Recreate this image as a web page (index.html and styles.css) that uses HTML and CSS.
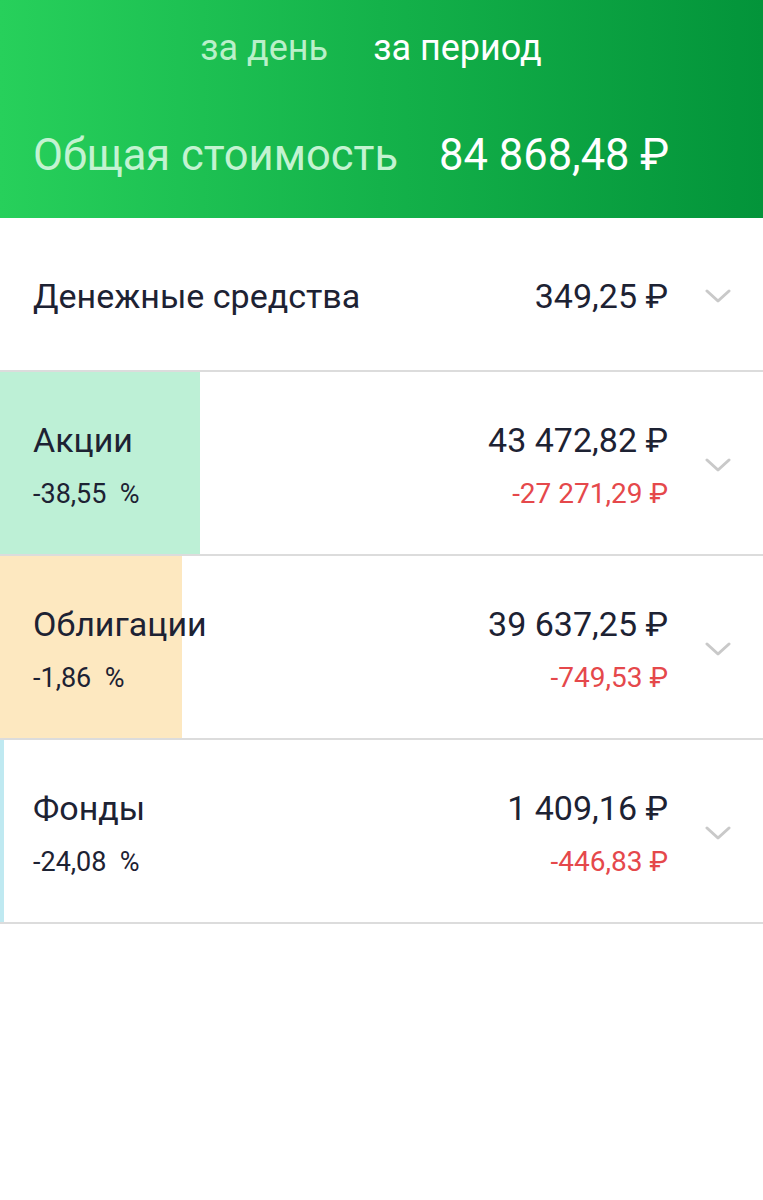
FILE: index.html
```html
<!DOCTYPE html>
<html lang="ru">
<head>
<meta charset="utf-8">
<link rel="stylesheet" href="styles.css">
</head>
<body>
<header class="hero">
  <nav class="tabs">
    <span class="tab">за день</span>
    <span class="tab tab-active">за период</span>
  </nav>
  <div class="total">
    <span class="total-label">Общая стоимость</span>
    <span class="total-value">84 868,48 ₽</span>
  </div>
</header>
<main class="list">
  <div class="row row-cash">
    <div class="row-left"><div class="title">Денежные средства</div></div>
    <div class="row-right"><div class="value">349,25 ₽</div></div>
    <div class="chev"><svg viewBox="0 0 26 14" width="26" height="14"><path d="M2 2 L13 12 L24 2" fill="none" stroke="#c9c9c9" stroke-width="3" stroke-linecap="round" stroke-linejoin="round"/></svg></div>
  </div>
  <div class="row row-asset" style="--w:200px;--c:#bdf0d6">
    <div class="row-left"><div class="title">Акции</div><div class="sub">-38,55&nbsp; %</div></div>
    <div class="row-right"><div class="value">43 472,82 ₽</div><div class="delta">-27 271,29 ₽</div></div>
    <div class="chev"><svg viewBox="0 0 26 14" width="26" height="14"><path d="M2 2 L13 12 L24 2" fill="none" stroke="#c9c9c9" stroke-width="3" stroke-linecap="round" stroke-linejoin="round"/></svg></div>
  </div>
  <div class="row row-asset" style="--w:182px;--c:#fde8c0">
    <div class="row-left"><div class="title">Облигации</div><div class="sub">-1,86&nbsp; %</div></div>
    <div class="row-right"><div class="value">39 637,25 ₽</div><div class="delta">-749,53 ₽</div></div>
    <div class="chev"><svg viewBox="0 0 26 14" width="26" height="14"><path d="M2 2 L13 12 L24 2" fill="none" stroke="#c9c9c9" stroke-width="3" stroke-linecap="round" stroke-linejoin="round"/></svg></div>
  </div>
  <div class="row row-asset" style="--w:4px;--c:#bfe9f1">
    <div class="row-left"><div class="title">Фонды</div><div class="sub">-24,08&nbsp; %</div></div>
    <div class="row-right"><div class="value">1 409,16 ₽</div><div class="delta">-446,83 ₽</div></div>
    <div class="chev"><svg viewBox="0 0 26 14" width="26" height="14"><path d="M2 2 L13 12 L24 2" fill="none" stroke="#c9c9c9" stroke-width="3" stroke-linecap="round" stroke-linejoin="round"/></svg></div>
  </div>
</main>
</body>
</html>
```

FILE: styles.css
```css
* { box-sizing: border-box; }
html, body { margin: 0; padding: 0; background: #fff; }
body {
  width: 763px;
  font-family: Roboto, "Noto Sans", sans-serif;
  color: #1d2233;
}
.hero {
  height: 218px;
  background: linear-gradient(90deg, #27d05b 0%, #14b24a 50%, #03943a 100%);
  display: flex;
  flex-direction: column;
}
.tabs {
  display: flex;
  justify-content: center;
  gap: 45px;
  padding-top: 26px;
  padding-right: 21px;
  font-size: 36px;
  line-height: 44px;
}
.tab { color: #b9f0c9; }
.tab-active { color: #ffffff; }
.total {
  display: flex;
  align-items: baseline;
  gap: 41px;
  padding: 0 33px;
  margin-top: 60px;
  line-height: 52px;
}
.total-label { font-size: 43.5px; color: #c3f3d1; }
.total-value { font-size: 43.5px; color: #ffffff; }

.list { display: flex; flex-direction: column; }
.row {
  display: flex;
  align-items: center;
  padding-left: 33px;
  border-bottom: 2px solid #dcdcdc;
  background: linear-gradient(90deg, var(--c, #fff) 0, var(--c, #fff) var(--w, 0), #fff var(--w, 0));
}
.row-cash { height: 154px; padding-top: 4px; }
.row-asset { height: 184px; padding-top: 4px; }
.row-left { flex: 1; display: flex; flex-direction: column; gap: 18px; }
.row-right { display: flex; flex-direction: column; align-items: flex-end; gap: 18px; }
.title { font-size: 34px; line-height: 40px; color: #1d2233; }
.value { font-size: 34px; line-height: 40px; color: #1d2233; }
.sub { font-size: 27px; line-height: 32px; color: #1d2233; }
.delta { font-size: 28px; line-height: 32px; color: #e5484b; }
.chev {
  width: 26px;
  margin-left: 37px;
  margin-right: 32px;
  display: flex;
  align-items: center;
}
.chev svg { display: block; }
```
